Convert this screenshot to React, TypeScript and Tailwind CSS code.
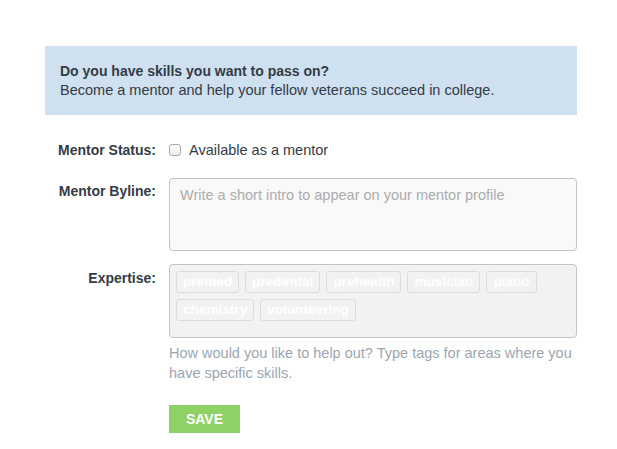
import { FC } from 'react';

const tags = ['premed', 'predental', 'prehealth', 'musician', 'piano', 'chemistry', 'volunteering'];

const App: FC = () => {
  return (
    <div className="min-h-[449px] bg-white font-['Liberation_Sans',Arial,sans-serif] text-[14.5px] leading-[20px] text-[#333c46]">
      <div className="ml-[45px] w-[532px] pt-[46px]">
        {/* Intro banner */}
        <div className="bg-[#cfe0f0] px-[15px] pt-[16px] pb-[15px] leading-[19px]">
          <p className="text-[14px] font-bold">Do you have skills you want to pass on?</p>
          <p>Become a mentor and help your fellow veterans succeed in college.</p>
        </div>

        {/* Mentor status */}
        <div className="mt-[25px] flex items-center">
          <label className="w-[111px] text-right text-[14px] font-bold">Mentor Status:</label>
          <div className="ml-[13px] flex items-center">
            <span className="h-[12px] w-[12px] rounded-[3px] border border-[#a9a9a9] bg-gradient-to-b from-white to-[#ececec]" />
            <span className="ml-[8px]">Available as a mentor</span>
          </div>
        </div>

        {/* Mentor byline */}
        <div className="mt-[18px] flex items-start">
          <label className="w-[111px] pt-[3px] text-right text-[14px] font-bold">Mentor Byline:</label>
          <div className="ml-[13px] h-[73px] flex-1 rounded-[4px] border border-[#c3c3c3] bg-[#f9f9f9] px-[10px] pt-[6px] text-[#acacac]">
            Write a short intro to appear on your mentor profile
          </div>
        </div>

        {/* Expertise */}
        <div className="mt-[13px] flex items-start">
          <label className="w-[111px] pt-[4px] text-right text-[14px] font-bold">Expertise:</label>
          <div className="ml-[13px] flex-1">
            <div className="h-[74px] rounded-[4px] border border-[#c3c3c3] bg-[#f2f2f2] px-[6px] pt-[6px]">
              <div className="flex flex-wrap gap-[6px]">
                {tags.map((t) => (
                  <span
                    key={t}
                    className="rounded-[3px] border border-[#dcdcdc] px-[6px] text-[13.6px] font-bold text-white"
                  >
                    {t}
                  </span>
                ))}
              </div>
            </div>
            <p className="mt-[5px] pr-[4px] text-[#9ba6b1]">
              How would you like to help out? Type tags for areas where you have specific skills.
            </p>
            <button className="mt-[22px] h-[28px] w-[71px] bg-[#8dd167] text-[14px] font-bold text-white">
              SAVE
            </button>
          </div>
        </div>
      </div>
    </div>
  );
};

export default App;
